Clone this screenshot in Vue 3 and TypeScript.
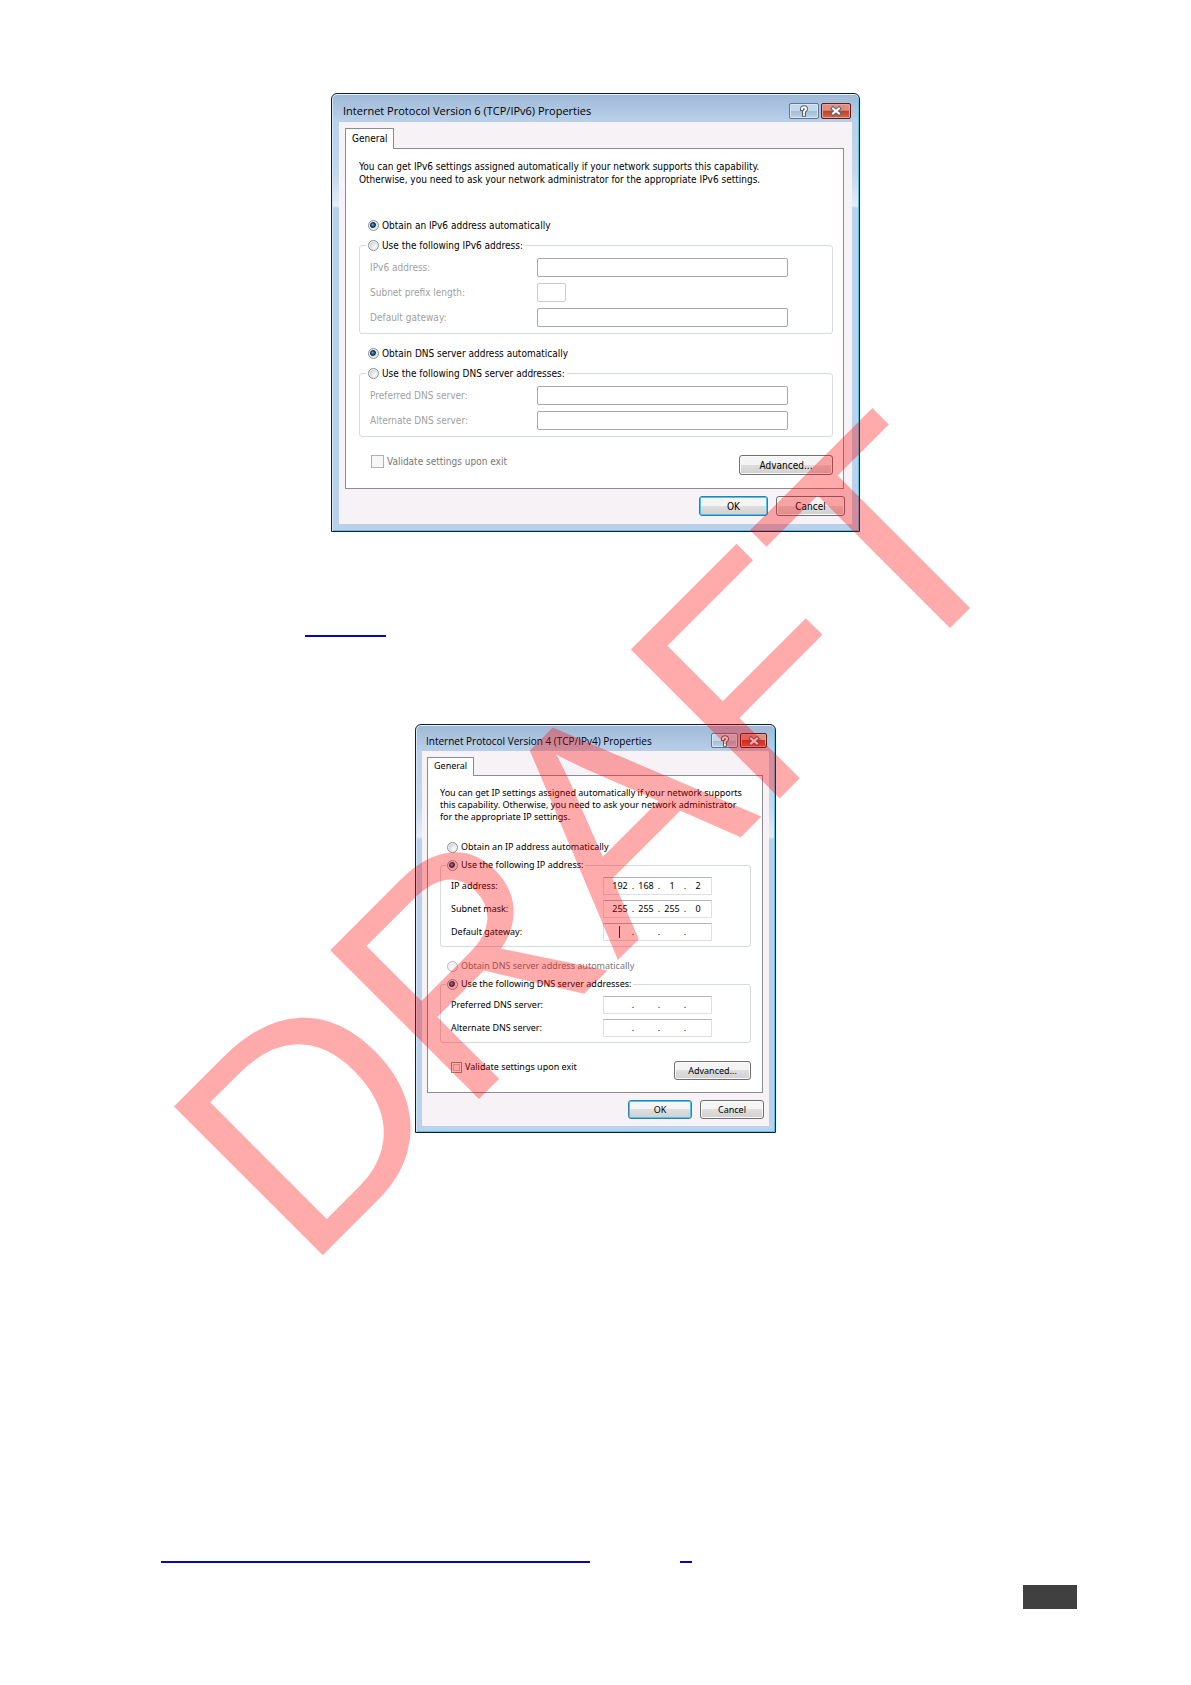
<script setup lang="ts">
import { ref } from 'vue'

interface Field {
  id: string
  label: string
  short?: boolean
  caret?: boolean
  octets?: string[]
}

interface Group {
  name: string
  auto: string
  manual: string
  autoDisabled?: boolean
  fields: Field[]
}

interface Dialog {
  key: string
  title: string
  intro: string[]
  groups: Group[]
}

const dialogs: Dialog[] = [
  {
    key: 'v6',
    title: 'Internet Protocol Version 6 (TCP/IPv6) Properties',
    intro: [
      'You can get IPv6 settings assigned automatically if your network supports this capability.',
      'Otherwise, you need to ask your network administrator for the appropriate IPv6 settings.',
    ],
    groups: [
      {
        name: 'v6-address',
        auto: 'Obtain an IPv6 address automatically',
        manual: 'Use the following IPv6 address:',
        fields: [
          { id: 'v6-ip', label: 'IPv6 address:' },
          { id: 'v6-prefix', label: 'Subnet prefix length:', short: true },
          { id: 'v6-gateway', label: 'Default gateway:' },
        ],
      },
      {
        name: 'v6-dns',
        auto: 'Obtain DNS server address automatically',
        manual: 'Use the following DNS server addresses:',
        fields: [
          { id: 'v6-dns1', label: 'Preferred DNS server:' },
          { id: 'v6-dns2', label: 'Alternate DNS server:' },
        ],
      },
    ],
  },
  {
    key: 'v4',
    title: 'Internet Protocol Version 4 (TCP/IPv4) Properties',
    intro: [
      'You can get IP settings assigned automatically if your network supports',
      'this capability. Otherwise, you need to ask your network administrator',
      'for the appropriate IP settings.',
    ],
    groups: [
      {
        name: 'v4-address',
        auto: 'Obtain an IP address automatically',
        manual: 'Use the following IP address:',
        fields: [
          { id: 'v4-ip', label: 'IP address:', octets: ['192', '168', '1', '2'] },
          { id: 'v4-mask', label: 'Subnet mask:', octets: ['255', '255', '255', '0'] },
          { id: 'v4-gateway', label: 'Default gateway:', octets: ['', '', '', ''], caret: true },
        ],
      },
      {
        name: 'v4-dns',
        auto: 'Obtain DNS server address automatically',
        manual: 'Use the following DNS server addresses:',
        autoDisabled: true,
        fields: [
          { id: 'v4-dns1', label: 'Preferred DNS server:', octets: ['', '', '', ''] },
          { id: 'v4-dns2', label: 'Alternate DNS server:', octets: ['', '', '', ''] },
        ],
      },
    ],
  },
]

const mode = ref<Record<string, string>>({
  'v6-address': 'auto',
  'v6-dns': 'auto',
  'v4-address': 'manual',
  'v4-dns': 'manual',
})
</script>

<template>
  <main class="page">
    <template v-for="(d, n) in dialogs" :key="d.key">
      <section class="dialog" :class="d.key" :aria-label="d.title">
        <header class="titlebar">
          <h2>{{ d.title }}</h2>
          <button class="cap help" type="button" aria-label="Help">
            <svg viewBox="0 0 12 12" aria-hidden="true">
              <path d="M4 4C4 1.600 8 1.600 8 4C8 5.600 6 5.400 6 7.200M6 9.500V9.700" class="edge" />
              <path d="M4 4C4 1.600 8 1.600 8 4C8 5.600 6 5.400 6 7.200M6 9.500V9.700" class="core" />
            </svg>
          </button>
          <button class="cap close" type="button" aria-label="Close">
            <svg viewBox="0 0 12 12" aria-hidden="true">
              <path d="M3 3.500L9 8.500M9 3.500L3 8.500" class="edge" />
              <path d="M3 3.500L9 8.500M9 3.500L3 8.500" class="core" />
            </svg>
          </button>
        </header>
        <div class="body">
          <div class="tabs"><button class="tab" type="button">General</button></div>
          <div class="panel">
            <p class="intro">
              <span v-for="line in d.intro" :key="line">{{ line }}</span>
            </p>
            <div v-for="g in d.groups" :key="g.name" class="group">
              <label class="choice" :class="{ off: g.autoDisabled }">
                <input v-model="mode[g.name]" type="radio" :name="g.name" value="auto" :disabled="g.autoDisabled" />
                {{ g.auto }}
              </label>
              <fieldset>
                <legend>
                  <label class="choice">
                    <input v-model="mode[g.name]" type="radio" :name="g.name" value="manual" />
                    {{ g.manual }}
                  </label>
                </legend>
                <div class="fields">
                  <div v-for="f in g.fields" :key="f.id" class="field">
                    <label :for="f.id">{{ f.label }}</label>
                    <div v-if="f.octets" class="ip">
                      <template v-for="(o, i) in f.octets" :key="i">
                        <span v-if="i > 0" class="dot">.</span>
                        <span class="cell">
                          <input
                            :id="i === 0 ? f.id : undefined"
                            type="text"
                            :value="o"
                            maxlength="3"
                            :aria-label="f.label + ' part ' + (i + 1)"
                          />
                          <i v-if="f.caret && i === 0" class="caret"></i>
                        </span>
                      </template>
                    </div>
                    <input v-else :id="f.id" class="text" :class="{ short: f.short }" type="text" disabled />
                  </div>
                </div>
              </fieldset>
            </div>
            <div class="extras">
              <label class="check">
                <input type="checkbox" :disabled="d.key === 'v6'" />
                Validate settings upon exit
              </label>
              <button class="btn wide" type="button">Advanced...</button>
            </div>
          </div>
          <footer class="actions">
            <button class="btn primary" type="button">OK</button>
            <button class="btn" type="button">Cancel</button>
          </footer>
        </div>
      </section>
      <div v-if="n === 0" class="reference">
        <a href="#section" aria-label="Section reference"></a>
      </div>
    </template>

    <footer class="page-foot">
      <div class="links">
        <a class="long" href="#document" aria-label="Document"></a>
        <a class="tiny" href="#note" aria-label="Note"></a>
      </div>
      <div class="page-number"></div>
    </footer>

    <svg class="watermark" viewBox="0 0 1191 1685" aria-hidden="true">
      <text x="305" y="1273" transform="rotate(-45 305 1273)">DRAFT</text>
    </svg>
  </main>
</template>

<style>
body {
  background: #fff;
}
</style>

<style scoped>
.page {
  position: relative;
  box-sizing: border-box;
  padding: 93px 0 76px;
  overflow: hidden;
}

.dialog {
  --frame: 7px;
  --title: 28px;
  --btn-h: 20px;
  --btn-w: 69px;
  --btn-wide: 94px;
  --row: 19px;
  --row-gap: 6px;
  box-sizing: border-box;
  width: 529px;
  margin: 0 auto;
  padding: 0 var(--frame) var(--frame);
  border: 1px solid #0d1f30;
  border-radius: 6px 6px 0 0;
  background: linear-gradient(#9fb8d6 0, #b9d1ea 28px, #c3d7ed 80px, #e4edf7 112px, #b9d1ea 114px, #b9d1ea 100%);
  box-shadow: inset 0 1px #e8f1fa, inset 1px 0 #d8e7f6, inset -1px -1px #55c4e4;
  color: #000;
  font: 10px/13px "DejaVu Sans Condensed", "DejaVu Sans", sans-serif;
}

.dialog.v4 {
  --frame: 6px;
  --title: 26px;
  --btn-h: 19px;
  --btn-w: 64px;
  --btn-wide: 77px;
  --row: 18px;
  --row-gap: 5px;
  width: 361px;
  font: 9px/12px "Noto Sans", "DejaVu Sans Condensed", sans-serif;
}

.dialog button,
.dialog input {
  box-sizing: border-box;
  margin: 0;
  font: inherit;
  color: inherit;
}

.titlebar {
  display: flex;
  align-items: flex-start;
  height: var(--title);
  margin: 0 -6px;
  padding: 0 7px 0 10px;
  box-sizing: border-box;
}

.titlebar h2 {
  flex: 1;
  margin: 0;
  font: 400 11px/34px "Open Sans", sans-serif;
  white-space: nowrap;
}

.v4 .titlebar {
  margin: 0 -5px;
  padding-left: 9px;
}

.v4 .titlebar h2 {
  font-size: 10px;
  line-height: 32px;
}

.dialog .cap {
  display: flex;
  align-items: center;
  justify-content: center;
  width: 30px;
  height: 16px;
  margin-top: 9px;
  padding: 0;
  border: 1px solid #5f7590;
  border-radius: 2px;
  box-shadow: inset 0 0 0 1px #d7e5f4;
  background: linear-gradient(#c4d6ea 50%, #a3bad6 50%, #bdd2e8);
}

.dialog .cap + .cap {
  margin-left: 2px;
}

.dialog .cap.close {
  border-color: #5c1a1a;
  box-shadow: inset 0 0 0 1px #e9a396;
  background: linear-gradient(#dd8f80 45%, #bb3f2b 50%, #d0694f);
}

.dialog.v4 .cap {
  width: 27px;
  height: 15px;
  margin-top: 8px;
}

.cap svg {
  flex: none;
  width: 12px;
  height: 12px;
}

.cap path {
  fill: none;
  stroke-linecap: square;
}

.cap .edge {
  stroke: #53606f;
  stroke-width: 4;
}

.cap .core {
  stroke: #fff;
  stroke-width: 2;
}

.body {
  padding: 6px 8px 8px 6px;
  background: #f6f2f6;
}

.v4 .body {
  padding: 6px 6px 7px 5px;
}

.tabs {
  display: flex;
}

.dialog .tab {
  position: relative;
  z-index: 1;
  height: 21px;
  margin-bottom: -1px;
  padding: 0 6px 2px;
  border: 1px solid #898c95;
  border-bottom: 0;
  background: #fff;
}

.dialog.v4 .tab {
  height: 19px;
}

.panel {
  padding: 11px 10px 13px 13px;
  border: 1px solid #898c95;
  background: #fff;
}

.v4 .panel {
  padding: 11px 11px 12px 12px;
}

.intro {
  margin: 0 0 32px;
}

.v4 .intro {
  margin-bottom: 17px;
}

.intro span {
  display: block;
  white-space: nowrap;
}

.choice {
  display: flex;
  align-items: center;
  gap: 3px;
  height: 14px;
  white-space: nowrap;
}

.group > .choice {
  padding-left: 9px;
}

.v4 .group > .choice {
  padding-left: 7px;
}

.group + .group {
  margin-top: 12px;
}

.choice.off {
  color: #777;
}

.choice input {
  appearance: none;
  flex: none;
  width: 11px;
  height: 11px;
  border: 1px solid #8e8f8f;
  border-radius: 50%;
  background: radial-gradient(circle at 65% 65%, #fff, #c9cdd2 70%);
  box-shadow: inset 0 0 0 1px #f4f4f4;
}

.choice input:checked {
  background: radial-gradient(circle at 42% 42%, #6fc4e8 0, #17507e 22%, #0b2c4b 36%, #dfe6ec 48%);
}

.choice input:disabled {
  border-color: #bbb;
  background: #f4f4f4;
}

fieldset {
  min-width: 0;
  margin: 6px 0 0;
  padding: 0;
  border: 1px solid #d5dadd;
  border-radius: 3px;
}

.v4 fieldset {
  margin-top: 4px;
}

legend {
  margin-left: 7px;
  padding: 0 2px 0 1px;
}

.v4 legend {
  margin-left: 5px;
}

.fields {
  display: grid;
  gap: var(--row-gap);
  padding: 6px 44px 6px 10px;
}

.v4 .fields {
  padding: 5px 38px 5px 10px;
}

.field {
  display: flex;
  align-items: center;
  height: var(--row);
}

.field label {
  flex: none;
  width: 167px;
  color: #a0a0a0;
}

.v4 .field label {
  width: 152px;
  color: inherit;
}

.dialog .text {
  flex: 1;
  min-width: 0;
  height: var(--row);
  padding: 0 3px;
  border: 1px solid #a5a7a9;
  border-radius: 2px;
  background: #fff;
}

.dialog .text.short {
  flex: none;
  width: 29px;
  border-color: #c9cbcd;
}

.ip {
  display: flex;
  flex: 1;
  box-sizing: border-box;
  height: var(--row);
  padding-left: 5px;
  border: 1px solid #dcdfe3;
  border-top-color: #b0b3b8;
  border-radius: 1px;
  line-height: 16px;
}

.cell {
  position: relative;
  width: 22px;
}

.cell input {
  display: block;
  width: 22px;
  height: 16px;
  padding: 0;
  border: 0;
  background: none;
  text-align: center;
}

.dot {
  width: 4px;
  text-align: center;
}

.caret {
  position: absolute;
  left: 10px;
  top: 2px;
  width: 1px;
  height: 12px;
  background: #222;
}

.extras {
  display: flex;
  align-items: flex-start;
  justify-content: space-between;
  margin-top: 18px;
}

.check {
  display: flex;
  align-items: center;
  gap: 3px;
  padding-left: 12px;
  color: #777;
}

.v4 .check {
  padding-left: 11px;
  color: inherit;
}

.check input {
  appearance: none;
  width: 13px;
  height: 13px;
  border: 1px solid #b1b1b1;
  background: #f7f7f7;
}

.v4 .check input {
  width: 11px;
  height: 11px;
  border-color: #8e8f8f;
  box-shadow: inset 0 0 0 1px #fff, inset 0 0 0 2px #c4c8cc;
}

.dialog .btn {
  width: var(--btn-w);
  height: var(--btn-h);
  padding: 0;
  border: 1px solid #707070;
  border-radius: 3px;
  background: linear-gradient(#f4f4f4 50%, #dedede 50%, #d0d0d0);
  box-shadow: inset 0 0 0 1px #fafafa;
}

.dialog .btn.wide {
  width: var(--btn-wide);
}

.dialog .btn.primary {
  border-color: #2f7fb0;
  box-shadow: inset 0 0 0 1px #4cc4ee;
}

.actions {
  display: flex;
  justify-content: flex-end;
  gap: 8px;
  margin: 7px -1px 0 0;
}

.reference {
  display: flex;
  height: 192px;
  padding: 83px 0 0 305px;
  box-sizing: border-box;
}

.reference a,
.links a {
  box-sizing: border-box;
  width: 81px;
  height: 22px;
  border-bottom: 2px solid #0909b0;
}

.page-foot {
  padding: 408px 114px 0 161px;
}

.links {
  display: flex;
}

.links .long {
  width: 429px;
}

.links .tiny {
  width: 12px;
  margin-left: 90px;
}

.page-number {
  width: 54px;
  height: 24px;
  margin: 22px 0 0 auto;
  background: #404040;
}

.watermark {
  position: absolute;
  left: 0;
  top: 0;
  width: 100%;
  pointer-events: none;
}

.watermark text {
  fill: #f00;
  fill-opacity: 0.33;
  font-family: "Liberation Sans", Arial, sans-serif;
  font-size: 306px;
}
</style>
